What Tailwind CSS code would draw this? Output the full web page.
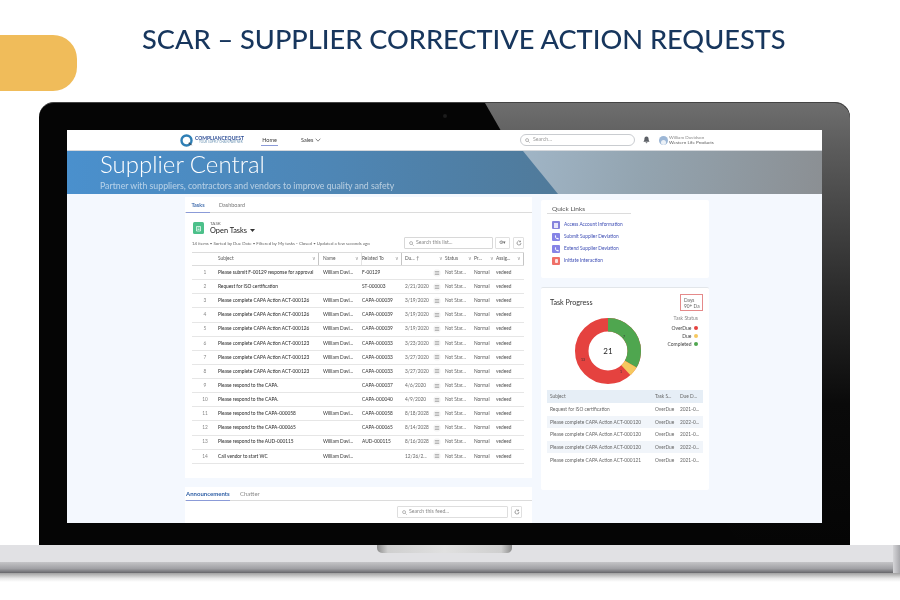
<!DOCTYPE html>
<html lang="en">
<head>
  <meta charset="UTF-8" />
  <title>SCAR - Supplier Corrective Action Requests</title>
  <script src="https://cdn.jsdelivr.net/npm/@tailwindcss/browser@4"></script>
</head>
<body class="w-[900px] h-[600px] overflow-hidden bg-white font-['Lato',sans-serif]">
  <!-- Slide header -->
  <header class="flex items-start h-[102px]">
    <div class="w-[77px] h-[56px] mt-[35px] bg-[#f0bc5a] rounded-r-[24px]"></div>
    <h1 class="ml-[65px] mt-[19px] text-[27.200px] leading-[40px] font-medium text-[#17365d] whitespace-nowrap blur-[0.3px]">SCAR – SUPPLIER CORRECTIVE ACTION REQUESTS</h1>
  </header>

  <!-- Laptop bezel -->
  <div class="relative ml-[39px] w-[811px] h-[443px] bg-[#050505] rounded-t-[15px] border-t border-[#444] pt-[27px] px-[28px]">
    <div class="absolute inset-0 rounded-t-[15px] bg-[linear-gradient(180deg,#6e6e6e_0%,#5c5c5c_10%,#2c2c2c_42%,#0a0a0a_68%,#050505_100%)] [clip-path:polygon(446px_0,100%_0,100%_100%,700px_100%)]"></div>
    <div class="absolute left-[404px] top-[11px] w-[4px] h-[4px] rounded-full bg-[#1c1c1c]"></div>

    <!-- Screen -->
    <div class="relative w-[755px] h-[393px] overflow-hidden bg-[#f4f8fe] text-[#3a3a3a] font-['Lato',sans-serif] blur-[0.3px]">
      <!-- Nav -->
      <nav class="flex items-center h-[21px] bg-white pl-[113px] border-b border-[#d5d8dc]">
        <svg class="w-[14px] h-[13px]" viewBox="0 0 14 13"><circle cx="6.500" cy="6.500" r="5" fill="none" stroke="#2f7fb5" stroke-width="2.400"/><path d="M9 8l3.500 3.500-4-1.500z" fill="#3d4a57"/></svg>
        <div class="ml-[1px] w-[50px] flex flex-col">
          <span class="text-[5px] leading-[5px] font-bold text-[#2e4e96] whitespace-nowrap">COMPLIANCEQUEST</span>
          <span class="text-[3px] leading-[3px] text-[#6f96b5] whitespace-nowrap pl-[4px]">YOUR SUPPLY CHAIN PARTNER</span>
        </div>
        <div class="relative ml-[16px] w-[17px] text-center text-[5.500px]">Home<div class="absolute left-0 right-0 top-[9px] h-[1px] bg-[#8b9bd8]"></div></div>
        <div class="ml-[23px] w-[20px] flex items-center gap-[2px] text-[5.500px]">Sales
          <svg class="w-[6px] h-[4px] shrink-0" viewBox="0 0 6 4"><path d="M.7.7 3 3.200 5.300.7" fill="none" stroke="#555" stroke-width=".7"/></svg>
        </div>
        <div class="ml-[199px] w-[115px] h-[12px] rounded-full border border-[#c9ccd0] flex items-center pl-[4px] gap-[3px] text-[5.200px] text-[#9a9a9a]">
          <svg class="w-[5px] h-[5px]" viewBox="0 0 6 6"><circle cx="2.500" cy="2.500" r="1.800" fill="none" stroke="#888" stroke-width=".7"/><path d="m4 4 1.600 1.600" stroke="#888" stroke-width=".7"/></svg>
          Search...
        </div>
        <svg class="ml-[8px] w-[7px] h-[8px]" viewBox="0 0 7 8"><path d="M3.500.4C2 .4 1.400 1.500 1.400 3c0 1.400-.5 2-1 2.700h6.200c-.5-.7-1-1.300-1-2.700 0-1.500-.6-2.600-2.100-2.600zM2.600 6.300a.9.9 0 0 0 1.800 0z" fill="#5c6066"/></svg>
        <div class="ml-[9px] w-[9px] h-[9px] rounded-full bg-[#9db7d6] flex items-end justify-center overflow-hidden">
          <div class="w-[5px] h-[5px] rounded-full bg-white/80"></div>
        </div>
        <div class="ml-[1px] flex flex-col text-[4.600px] leading-[5px] whitespace-nowrap">
          <span class="text-[#8a8a8a]">William Davidson</span>
          <span class="text-[#5c5c5c]">Western Life Products</span>
        </div>
      </nav>

      <!-- Banner -->
      <div class="relative h-[43px] pl-[33px] bg-[linear-gradient(90deg,#4a90cd_0%,#4e86b5_35%,#507a9a_65%,#507a9a_100%)] text-white">
        <div class="absolute inset-y-0 left-[456px] right-0 bg-[linear-gradient(100deg,#a0b5c6_0%,#93a4b0_40%,#8b8f93_100%)] [clip-path:polygon(0_0,100%_0,100%_100%,35px_100%)]"></div>
        <div class="relative text-[24px] leading-[26px] font-light">Supplier Central</div>
        <div class="relative mt-[3px] text-[8.750px] leading-[11px] text-white/60">Partner with suppliers, contractors and vendors to improve quality and safety</div>
      </div>

      <!-- Page body -->
      <div class="flex pl-[118px]">
        <div class="w-[347px] pt-[3px]">
          <!-- Tasks card -->
          <section class="h-[281px] bg-white">
            <div class="flex h-[16px] pt-[2px] border-b border-[#dcdcdc] text-[5.500px]">
              <div class="relative ml-[1px] w-[24px] text-center leading-[13px] text-[#2f5fa5] font-semibold">Tasks<div class="absolute inset-x-0 top-[13px] h-[1px] bg-[#8b9bd8]"></div></div>
              <div class="ml-[9px] leading-[13px] text-[#777]">Dashboard</div>
            </div>
            <div class="flex items-center pl-[8px] mt-[8px]">
              <div class="w-[11px] h-[12px] rounded-[1.500px] bg-[#4cc08a] flex items-center justify-center">
                <svg class="w-[7px] h-[7px]" viewBox="0 0 7 7"><path d="M1.500 1.500h4v4.500h-4zM2.500 3h2M2.500 4.500h2" fill="none" stroke="#fff" stroke-width=".7"/></svg>
              </div>
              <div class="ml-[6px] flex flex-col">
                <span class="text-[4.500px] leading-[5px] text-[#666]">TASK</span>
                <span class="text-[7.400px] leading-[9px] text-[#222] flex items-center gap-[3px]">Open Tasks
                  <svg class="w-[5px] h-[3px]" viewBox="0 0 5 3"><path d="M0 0h5L2.500 3z" fill="#333"/></svg>
                </span>
              </div>
            </div>
            <div class="flex items-center mt-[1px] pl-[7px] h-[14px]">
              <span class="w-[212px] pt-[3px] text-[4.400px] text-[#666] whitespace-nowrap overflow-hidden">14 items • Sorted by Due Date • Filtered by My tasks - Closed • Updated a few seconds ago</span>
              <div class="w-[89px] h-[12px] border border-[#d8d8d8] rounded-[1px] flex items-center pl-[4px] gap-[2px] text-[5.200px] text-[#888]">
                <svg class="w-[5px] h-[5px]" viewBox="0 0 6 6"><circle cx="2.500" cy="2.500" r="1.800" fill="none" stroke="#888" stroke-width=".7"/><path d="m4 4 1.600 1.600" stroke="#888" stroke-width=".7"/></svg>
                Search this list...
              </div>
              <div class="ml-[2px] w-[15px] h-[12px] border border-[#e0e0e0] rounded-[1px] flex items-center justify-center text-[5px] text-[#666]">⚙▾</div>
              <div class="ml-[3px] w-[11px] h-[12px] border border-[#e0e0e0] rounded-[1px] flex items-center justify-center">
                <svg class="w-[6px] h-[6px]" viewBox="0 0 6 6"><path d="M5 3a2 2 0 1 1-.7-1.500M4.500.7v1.200H3.300" fill="none" stroke="#666" stroke-width=".6"/></svg>
              </div>
            </div>

            <!-- Task list -->
            <div class="ml-[7px] w-[332px] mt-[2px] text-[4.800px]">
              <div class="grid grid-cols-[26px_105px_39px_43px_30px_10px_29px_22px_28px] items-center h-[14px] border-y border-[#dcdcdc] text-[#555]">
                <div></div>
                <div class="flex justify-between mr-[4px] pr-[2px] border-r border-[#c5c5c5] h-[12px] items-center">Subject<span class="text-[#999]">∨</span></div>
                <div class="flex justify-between pr-[2px] border-r border-[#e4e4e4] h-[12px] items-center">Name<span class="text-[#999]">∨</span></div>
                <div class="flex justify-between mr-[3px] pr-[2px] border-r border-[#c5c5c5] h-[12px] items-center">Related To<span class="text-[#999]">∨</span></div>
                <div class="col-span-2 flex justify-between pr-[2px] h-[12px] items-center">Du... ↑<span class="text-[#999]">∨</span></div>
                <div class="flex justify-between pr-[2px] h-[12px] items-center">Status<span class="text-[#999]">∨</span></div>
                <div class="flex justify-between pr-[2px] h-[12px] items-center">Pr...<span class="text-[#999]">∨</span></div>
                <div class="flex justify-between pr-[2px] border-r border-[#c5c5c5] h-[12px] items-center">Assig...<span class="text-[#999]">∨</span></div>
              </div>
              <div id="taskRows"></div>
            </div>
          </section>

          <!-- Feed card -->
          <section class="mt-[9px] h-[40px] bg-white">
            <div class="flex h-[14px] border-b border-[#dcdcdc] text-[6px]">
              <div class="relative ml-[1px] w-[44px] leading-[14px] text-[#2f5fa5] font-bold whitespace-nowrap">Announcements<div class="absolute inset-x-0 top-[13px] h-[1px] bg-[#8b9bd8]"></div></div>
              <div class="ml-[10px] leading-[14px] text-[#888]">Chatter</div>
            </div>
            <div class="flex mt-[5px] ml-[212px]">
              <div class="w-[111px] h-[12px] border border-[#dedede] rounded-[1px] flex items-center pl-[4px] gap-[2px] text-[5.200px] text-[#888]">
                <svg class="w-[5px] h-[5px]" viewBox="0 0 6 6"><circle cx="2.500" cy="2.500" r="1.800" fill="none" stroke="#888" stroke-width=".7"/><path d="m4 4 1.600 1.600" stroke="#888" stroke-width=".7"/></svg>
                Search this feed...
              </div>
              <div class="ml-[3px] w-[11px] h-[12px] border border-[#e0e0e0] rounded-[1px] flex items-center justify-center">
                <svg class="w-[6px] h-[6px]" viewBox="0 0 6 6"><path d="M5 3a2 2 0 1 1-.7-1.500M4.500.7v1.200H3.300" fill="none" stroke="#666" stroke-width=".6"/></svg>
              </div>
            </div>
          </section>
        </div>

        <!-- Right column -->
        <div class="ml-[9px] w-[168px] pt-[6px]">
          <section class="h-[78px] bg-white rounded-[2px] pt-[5px]">
            <div class="ml-[6px] w-[84px] h-[9px] border-b border-[#dcdcdc] pl-[5px] text-[6.500px] leading-[8px] text-[#555]">Quick Links</div>
            <div class="mt-[7px] ml-[11px] flex flex-col gap-[4px] text-[4.800px] text-[#3c4cb4]">
              <div class="flex items-center gap-[4px] h-[8px]"><div class="w-[8px] h-[8px] rounded-[1px] bg-[#8684dc] flex items-center justify-center"><div class="w-[4px] h-[5px] bg-white/80"></div></div>Access Account Information</div>
              <div class="flex items-center gap-[4px] h-[8px]"><div class="w-[8px] h-[8px] rounded-[1px] bg-[#8684e6] flex items-center justify-center"><svg class="w-[5px] h-[5px]" viewBox="0 0 5 5"><path d="M1 .5c-.6 1.700.8 3.600 3.500 4l.2-1.200-1.200-.5-.5.500C2 2.500 1.700 2 1.700 1.800l.5-.5L1.800.3z" fill="#fff"/></svg></div>Submit Supplier Deviation</div>
              <div class="flex items-center gap-[4px] h-[8px]"><div class="w-[8px] h-[8px] rounded-[1px] bg-[#8684e6] flex items-center justify-center"><svg class="w-[5px] h-[5px]" viewBox="0 0 5 5"><path d="M1 .5c-.6 1.700.8 3.600 3.500 4l.2-1.200-1.200-.5-.5.500C2 2.500 1.700 2 1.700 1.800l.5-.5L1.800.3z" fill="#fff"/></svg></div>Extend Supplier Deviation</div>
              <div class="flex items-center gap-[4px] h-[8px]"><div class="w-[8px] h-[8px] rounded-[1px] bg-[#ef7068] flex items-center justify-center"><div class="w-[3px] h-[4px] bg-white/80 rounded-[1px]"></div></div>Initiate Interaction</div>
            </div>
          </section>

          <section class="mt-[9px] h-[203px] bg-white rounded-[2px] border-t border-[#e2e6ea] px-[6px]">
            <div class="flex justify-between items-start">
              <div class="ml-[3px] mt-[10px] text-[7.200px] leading-[9px] text-[#333]">Task Progress</div>
              <div class="mt-[6px] w-[23px] h-[17px] border border-[#e58a8a] pt-[2px] pl-[3px] text-[4.800px] leading-[6px] text-[#666]">Days<br />90+ Da</div>
            </div>
            <div class="relative h-[80px]">
              <svg class="absolute left-[27px] top-[6px] w-[68px] h-[68px]" viewBox="0 0 68 68">
                <g fill="none" stroke-width="13.500" transform="rotate(-90 34 34)">
                  <circle cx="34" cy="34" r="26.250" stroke="#e5423f" pathLength="360" />
                  <circle cx="34" cy="34" r="26.250" stroke="#4fa64f" pathLength="360" stroke-dasharray="120 240" />
                  <circle cx="34" cy="34" r="26.250" stroke="#f6c85f" pathLength="360" stroke-dasharray="17 343" stroke-dashoffset="-120" />
                </g>
                <text x="34" y="37" text-anchor="middle" font-size="8" fill="#222">21</text>
                <text x="50" y="21" text-anchor="middle" font-size="3.500" fill="#333">7</text>
                <text x="47" y="56" text-anchor="middle" font-size="3.500" fill="#333">1</text>
                <text x="9" y="44" text-anchor="middle" font-size="3.500" fill="#333">13</text>
              </svg>
              <div class="absolute right-[5px] top-[3px] flex flex-col items-end text-[5px] leading-[8px] text-[#444]">
                <span class="pr-[0px] text-[#888]">Task Status</span>
                <div class="flex items-center gap-[2px] mt-[2px]">OverDue<span class="w-[4.500px] h-[4.500px] rounded-full bg-[#e5423f]"></span></div>
                <div class="flex items-center gap-[2px]">Due<span class="w-[4.500px] h-[4.500px] rounded-full bg-[#f6c85f]"></span></div>
                <div class="flex items-center gap-[2px]">Completed<span class="w-[4.500px] h-[4.500px] rounded-full bg-[#4fa64f]"></span></div>
              </div>
            </div>
            <div class="w-[156px] -mt-[1px] text-[4.800px] text-[#666]">
              <div class="grid grid-cols-[105px_25px_23px] items-center h-[13px] bg-[#e6eef6] pl-[3px]"><span>Subject</span><span>Task S...</span><span>Due D...</span></div>
              <div id="progressRows" class="h-[60px] overflow-hidden"></div>
            </div>
          </section>
        </div>
      </div>
    </div>
  </div>

  <!-- Laptop base -->
  <div class="relative h-[55px]">
    <div class="h-[17px] bg-[#e1e1e4]"></div>
    <div class="h-[11px] bg-[linear-gradient(180deg,#c4c4c7_0%,#a0a0a4_60%,#66666a_100%)]"></div>
    <div class="h-[9px] bg-[linear-gradient(180deg,#a0a0a0_0%,#e8e8e8_60%,#ffffff_100%)]"></div>
    <div class="absolute left-[377px] top-0 w-[135px] h-[8px] rounded-b-[5px] bg-[linear-gradient(90deg,#8c8c8c_0%,#cfcfcf_8%,#e0e0e0_50%,#cfcfcf_92%,#8c8c8c_100%)]"></div>
    <div class="absolute right-0 top-0 w-[7px] h-[28px] bg-[linear-gradient(90deg,#d5d5d8_0%,#a8a8ac_100%)]"></div>
  </div>

  <script>
    const tasks = [
      ['Please submit F-00129 response for approval', 'William Davi...', 'F-00129', ''],
      ['Request for ISO certification', '', 'ST-000003', '2/21/2020'],
      ['Please complete CAPA Action ACT-000126', 'William Davi...', 'CAPA-000039', '3/19/2020'],
      ['Please complete CAPA Action ACT-000126', 'William Davi...', 'CAPA-000039', '3/19/2020'],
      ['Please complete CAPA Action ACT-000126', 'William Davi...', 'CAPA-000039', '3/19/2020'],
      ['Please complete CAPA Action ACT-000123', 'William Davi...', 'CAPA-000033', '3/23/2020'],
      ['Please complete CAPA Action ACT-000123', 'William Davi...', 'CAPA-000033', '3/27/2020'],
      ['Please complete CAPA Action ACT-000123', 'William Davi...', 'CAPA-000033', '3/27/2020'],
      ['Please respond to the CAPA.', '', 'CAPA-000037', '4/6/2020'],
      ['Please respond to the CAPA.', '', 'CAPA-000040', '4/9/2020'],
      ['Please respond to the CAPA-000058', 'William Davi...', 'CAPA-000058', '8/18/2028'],
      ['Please respond to the CAPA-000065', '', 'CAPA-000065', '8/14/2028'],
      ['Please respond to the AUD-000115', 'William Davi...', 'AUD-000115', '8/16/2028'],
      ['Call vendor to start WC', 'William Davi...', '', '12/26/2...'],
    ];
    document.getElementById('taskRows').innerHTML = tasks.map((t, i) => `
      <div class="grid grid-cols-[26px_105px_39px_43px_30px_10px_29px_22px_28px] items-center h-[14.130px] border-b border-[#e6e6e6] whitespace-nowrap overflow-hidden text-[#333]">
        <span class="text-center text-[#888]">${i + 1}</span>
        <span class="font-medium">${t[0]}</span>
        <span>${t[1]}</span>
        <span>${t[2]}</span>
        <span class="text-[#666]">${t[3]}</span>
        <svg class="-ml-[2px] w-[8px] h-[8px]" viewBox="0 0 8 8"><circle cx="4" cy="4" r="3.800" fill="#f6f6f6"/><path d="M1.800 2.500h4.400M1.800 4h4.400M1.800 5.500h4.400" stroke="#777" stroke-width=".5"/></svg>
        <span class="text-[#666]">Not Star...</span>
        <span class="text-[#555]">Normal</span>
        <span class="text-[#555]">vedeed</span>
      </div>`).join('');

    const progress = [
      ['Request for ISO certification', '2021-0...', false],
      ['Please complete CAPA Action ACT-000120', '2022-0...', true],
      ['Please complete CAPA Action ACT-000120', '2021-0...', false],
      ['Please complete CAPA Action ACT-000120', '2022-0...', true],
      ['Please complete CAPA Action ACT-000121', '2021-0...', false],
    ];
    document.getElementById('progressRows').innerHTML = progress.map(p => `
      <div class="grid grid-cols-[105px_25px_23px] items-center h-[12.600px] pl-[3px] pt-[1px] whitespace-nowrap ${p[2] ? 'bg-[#f1f5fa]' : 'bg-white'}">
        <span>${p[0]}</span><span>OverDue</span><span>${p[1]}</span>
      </div>`).join('');
  </script>
</body>
</html>
